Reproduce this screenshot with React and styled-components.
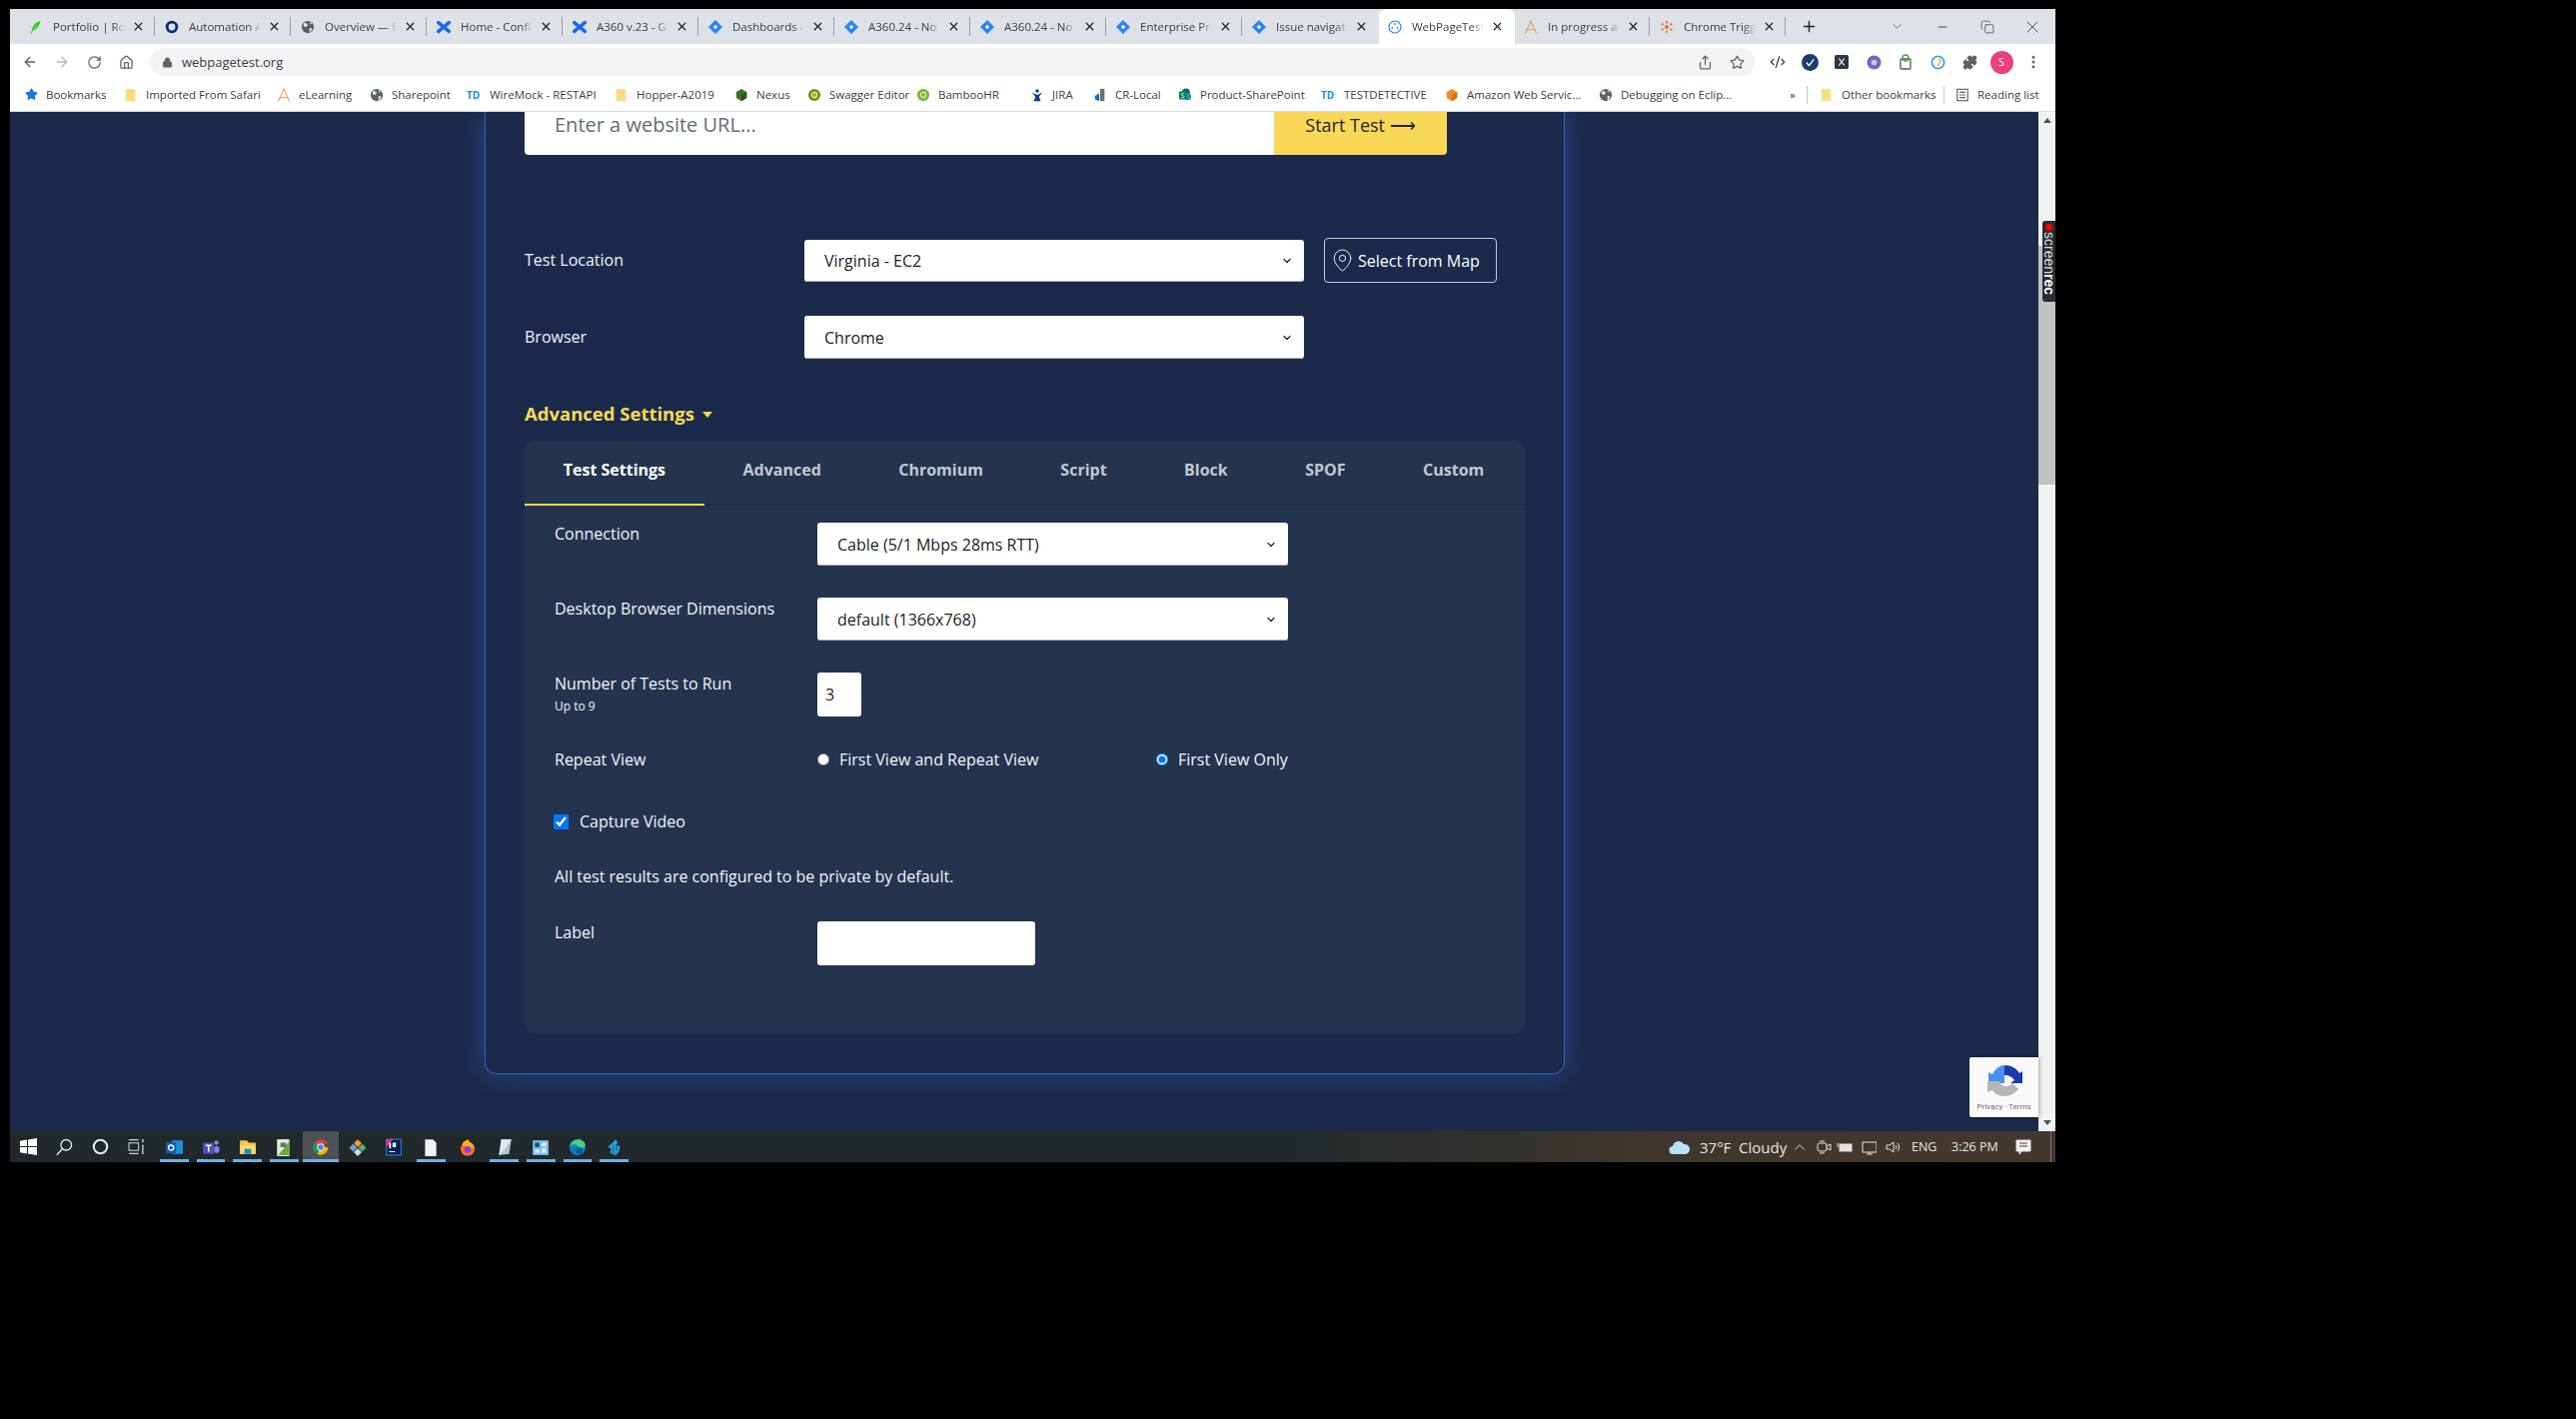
import React from "react";
import styled, { createGlobalStyle } from "styled-components";
import {
  ArrowLeft, ArrowRight, RotateCw, Home, Lock, Share, Star, Puzzle, MoreVertical,
  MapPin, Minus, Copy, X, Plus, ChevronDown, ChevronUp, Code2,
} from "lucide-react";

const GlobalStyle = createGlobalStyle`
  html, body { margin: 0; padding: 0; background: #000; }
  * { box-sizing: border-box; }
  body { font-family: "Open Sans", "Liberation Sans", sans-serif; }
`;

const Page = styled.div`
  min-height: 1420px;
  padding: 9px 0 0 10px;
  background: #000;
`;

const Screen = styled.div`
  width: 2047px;
  display: flex;
  flex-direction: column;
`;

/* browser chrome */
const TabStrip = styled.div`
  height: 35px;
  background: #dee1e6;
  display: flex;
  align-items: stretch;
  padding-left: 10px;
  color: #3c4043;
`;

const Tab = styled.div`
  width: 136px;
  display: flex;
  align-items: center;
  padding: 0 11px 0 9px;
  gap: 10px;
  position: relative;
  background: ${(p) => (p.$active ? "#fff" : "transparent")};
  border-radius: ${(p) => (p.$active ? "8px 8px 0 0" : "0")};
  &::after {
    content: "";
    position: absolute;
    right: 1px;
    top: 8px;
    bottom: 8px;
    width: 1px;
    background: ${(p) => (p.$noSep ? "transparent" : "#9aa0a6")};
  }
`;

const TabTitle = styled.span`
  flex: 1;
  min-width: 0;
  margin-right: -6px;
  font-size: 11.5px;
  white-space: nowrap;
  overflow: hidden;
  -webkit-mask-image: linear-gradient(90deg, #000 80%, transparent 96%);
  mask-image: linear-gradient(90deg, #000 80%, transparent 96%);
`;

const NewTab = styled.div`
  width: 44px;
  display: flex;
  align-items: center;
  justify-content: center;
  color: #202124;
`;

const WindowButtons = styled.div`
  margin-left: auto;
  padding-right: 1px;
  display: flex;
  align-items: center;
  color: #3c4043;
`;

const WindowButton = styled.div`
  width: 45px;
  display: flex;
  justify-content: center;
`;

const Toolbar = styled.div`
  height: 36px;
  background: #fff;
  display: flex;
  align-items: center;
  padding-left: 4px;
`;

const NavButton = styled.div`
  width: 32px;
  display: flex;
  justify-content: center;
  color: ${(p) => (p.$muted ? "#b4b7bb" : "#5f6368")};
`;

const UrlBar = styled.div`
  width: 1606px;
  height: 28px;
  margin-left: 8px;
  border-radius: 14px;
  background: #f1f3f4;
  display: flex;
  align-items: center;
  padding: 0 10px 0 12px;
  gap: 9px;
  font-size: 13px;
  color: #3c4043;
`;

const UrlActions = styled.div`
  margin-left: auto;
  display: flex;
  gap: 17px;
  color: #5f6368;
`;

const Extensions = styled.div`
  display: flex;
  align-items: center;
  margin-left: 7px;
`;

const Extension = styled.div`
  width: 32px;
  display: flex;
  justify-content: center;
  align-items: center;
  color: #3c4043;
`;

const Avatar = styled.div`
  width: 23px;
  height: 23px;
  border-radius: 50%;
  background: #ec407a;
  color: #fff;
  font-size: 10px;
  display: flex;
  align-items: center;
  justify-content: center;
`;

const BookmarkBar = styled.div`
  height: 32px;
  background: #fff;
  border-bottom: 1px solid #d9dbde;
  display: flex;
  align-items: center;
  padding: 0 0 2px 15px;
  font-size: 11.5px;
  color: #3c4043;
`;

const Bookmark = styled.div`
  width: ${(p) => p.$w}px;
  flex: none;
  display: flex;
  align-items: center;
  gap: 8px;
  white-space: nowrap;
`;

const BookmarkSep = styled.div`
  width: 1px;
  height: 18px;
  background: #c8cacd;
  margin-right: ${(p) => p.$after}px;
`;

/* page */
const Viewport = styled.div`
  height: 1020px;
  position: relative;
  overflow: hidden;
  display: flex;
  background: #1b2a4b;
`;

const Main = styled.div`
  flex: 1;
  padding-left: 475px;
`;

const Card = styled.div`
  width: 1081px;
  padding: 0 38px 40px 39px;
  background: #1b2a4b;
  border: 1px solid #2c62b4;
  border-top: none;
  border-radius: 0 0 12px 12px;
  box-shadow: 0 0 26px rgba(46, 104, 200, 0.5);
`;

const UrlRow = styled.div`
  width: 923px;
  height: 43px;
  display: flex;
  border-radius: 0 0 4px 4px;
  overflow: hidden;
`;

const UrlInput = styled.input`
  flex: 1;
  border: none;
  outline: none;
  padding: 0 30px 18px;
  font: 400 20px "Open Sans", sans-serif;
  background: #fff;
  &::placeholder { color: #666d76; opacity: 1; }
`;

const StartButton = styled.button`
  width: 173px;
  border: none;
  padding: 0 0 18px;
  background: #f9d857;
  color: #1e2433;
  font: 400 18px "Open Sans", sans-serif;
`;

const FieldRow = styled.div`
  display: flex;
  align-items: center;
  margin-top: ${(p) => p.$top}px;
`;

const FieldLabel = styled.label`
  width: 280px;
  margin-top: -2px;
  color: #f2f4f8;
  font-size: 16px;
`;

const SelectBox = styled.div`
  position: relative;
  width: ${(p) => p.$w}px;
  height: ${(p) => p.$h}px;
  svg {
    position: absolute;
    right: 11px;
    top: 50%;
    transform: translateY(-50%);
    color: #222;
    pointer-events: none;
  }
`;

const NativeSelect = styled.select`
  appearance: none;
  width: 100%;
  height: 100%;
  padding: 0 20px;
  background: #fff;
  border: none;
  border-radius: 3px;
  color: #222;
  font: 400 16px "Open Sans", sans-serif;
  box-shadow: inset 0 -1px 0 #a9afba;
`;

const MapButton = styled.button`
  width: 173px;
  height: 45px;
  margin-left: 20px;
  display: flex;
  align-items: center;
  gap: 3px;
  padding: 0 5px;
  background: transparent;
  border: 1px solid #c3c9d4;
  border-radius: 4px;
  color: #fff;
  font: 400 16px "Open Sans", sans-serif;
  white-space: nowrap;
`;

const AdvancedToggle = styled.div`
  margin-top: 43px;
  height: 24px;
  display: flex;
  align-items: center;
  gap: 8px;
  color: #f9d857;
  font-size: 18.5px;
  font-weight: 700;
  line-height: 24px;
`;

const Caret = styled.span`
  width: 0;
  height: 0;
  margin-top: 2px;
  border-left: 5px solid transparent;
  border-right: 5px solid transparent;
  border-top: 6px solid #f9d857;
`;

const TabPanel = styled.div`
  width: 1001px;
  margin-top: 15px;
  padding-bottom: 68px;
  background: #24344f;
  border-radius: 10px;
`;

const TabList = styled.div`
  height: 65px;
  display: flex;
  padding-right: 2px;
  border-bottom: 2px solid #1f2d49;
`;

const PanelTab = styled.div`
  flex: 1 1 auto;
  padding: 0 36px 6px;
  height: 65px;
  display: flex;
  align-items: center;
  justify-content: center;
  font-size: 16px;
  font-weight: 700;
  white-space: nowrap;
  color: ${(p) => (p.$active ? "#fff" : "#c2c7cf")};
  border-bottom: 2px solid ${(p) => (p.$active ? "#f9d857" : "transparent")};
`;

const PanelBody = styled.div`
  padding: 17px 30px 0;
  color: #f2f4f8;
  font-size: 16px;
  line-height: 24px;
`;

const SettingRow = styled.div`
  display: grid;
  grid-template-columns: 263px 1fr;
  align-items: start;
  margin-top: ${(p) => p.$top || 0}px;
`;

const SettingLabel = styled.label`
  margin-top: -1px;
`;

const SmallNote = styled.div`
  font-size: 12px;
  line-height: 22px;
`;

const BoxInput = styled.input`
  width: ${(p) => p.$w}px;
  height: 44px;
  padding: 0 8px;
  border: none;
  border-radius: 3px;
  background: #fff;
  color: #222;
  font: 400 16px "Open Sans", sans-serif;
`;

const RadioGroup = styled.div`
  display: grid;
  grid-template-columns: 339px auto;
  margin-top: -1px;
`;

const RadioLabel = styled.label`
  display: flex;
  align-items: center;
  gap: 10px;
  white-space: nowrap;
`;

const Radio = styled.input`
  width: 12px;
  height: 12px;
  margin: 0;
  accent-color: #0075ff;
`;

const CheckRow = styled.label`
  display: flex;
  align-items: center;
  gap: 11px;
  margin: 38px 0 0 -1px;
`;

const CheckBox = styled.input`
  width: 15px;
  height: 15px;
  margin: 0;
  accent-color: #0075ff;
`;

const Plain = styled.p`
  margin: 31px 0 0;
`;

/* scrollbar + overlays */
const ScrollBar = styled.div`
  width: 17px;
  flex: none;
  background: #f1f1f1;
  display: flex;
  flex-direction: column;
  justify-content: space-between;
  align-items: center;
  padding: 6px 0;
  position: relative;
`;

const ScrollThumb = styled.div`
  position: absolute;
  top: 134px;
  left: 0;
  right: 0;
  height: 239px;
  background: #c1c1c1;
`;

const ScrollArrow = styled.span`
  width: 0;
  height: 0;
  border-left: 4px solid transparent;
  border-right: 4px solid transparent;
  border-bottom: ${(p) => (p.$down ? "0" : "5px solid #505050")};
  border-top: ${(p) => (p.$down ? "5px solid #505050" : "0")};
`;

const RecBadge = styled.div`
  position: absolute;
  top: 109px;
  right: 0;
  width: 13px;
  height: 81px;
  background: #2a2c33;
  border-radius: 3px 0 0 3px;
  color: #dcdcdc;
  font: 400 14px "Liberation Sans", sans-serif;
  display: flex;
  flex-direction: column;
  align-items: center;
  padding-top: 3px;
  b { font-weight: 700; color: #fff; }
`;

const RecDot = styled.span`
  width: 7px;
  height: 7px;
  border-radius: 50%;
  background: #f00;
  flex: none;
  margin-bottom: 1px;
`;

const RecText = styled.span`
  writing-mode: vertical-rl;
  line-height: 13px;
`;

const Recaptcha = styled.div`
  position: absolute;
  right: 17px;
  bottom: 14px;
  width: 69px;
  height: 60px;
  background: #f9f9f9;
  border-radius: 2px 0 0 2px;
  box-shadow: 0 0 5px rgba(0, 0, 0, 0.45);
  display: flex;
  flex-direction: column;
  align-items: center;
  padding-top: 5px;
  color: #6f6f6f;
  font: 400 8px Roboto, sans-serif;
  gap: 2px;
  white-space: nowrap;
`;

/* taskbar */
const Taskbar = styled.div`
  height: 31px;
  display: flex;
  align-items: stretch;
  background: linear-gradient(90deg, #21292d 0%, #21292c 62%, #3f372f 80%, #43382f 100%);
  color: #e4e4e4;
`;

const TaskCell = styled.div`
  width: ${(p) => p.$w || 36.7}px;
  flex: none;
  display: flex;
  align-items: center;
  justify-content: center;
  position: relative;
  background: ${(p) => (p.$active ? "#4d5155" : "transparent")};
  &::after {
    content: "";
    display: ${(p) => (p.$open ? "block" : "none")};
    position: absolute;
    bottom: 0;
    left: ${(p) => (p.$active ? 0 : 4)}px;
    right: ${(p) => (p.$active ? 0 : 4)}px;
    height: 3px;
    background: #6fb0e6;
  }
`;

const TaskGap = styled.div`
  width: 2px;
  flex: none;
`;

const Tray = styled.div`
  margin-left: auto;
  display: flex;
  align-items: center;
  font-size: 12px;
`;

const TrayItem = styled.div`
  width: ${(p) => p.$w}px;
  flex: none;
  display: flex;
  align-items: center;
  white-space: nowrap;
  font-size: ${(p) => p.$size || 12}px;
`;

const ShowDesktop = styled.div`
  width: 5px;
  align-self: stretch;
  border-left: 1px solid #77736d;
`;

/* favicon drawings */
const Svg = ({ s = 14, children, vb = "0 0 16 16" }) => (
  <svg width={s} height={s} viewBox={vb} style={{ flex: "none", display: "block" }}>{children}</svg>
);

const Feather = () => <Svg><path d="M13 1C8 2 4 6 3 13l-1 2 1 .3C4 12 7 8 10 5 7.8 8 6 11 5 12c4-1 7-6 8-11z" fill="#35c52a" /></Svg>;
const Ring = () => <Svg><circle cx="8" cy="8" r="5.5" fill="none" stroke="#0b2a7e" strokeWidth="3.2" /></Svg>;
const Globe = () => (
  <Svg>
    <circle cx="8" cy="8" r="7" fill="#5c6166" />
    <path d="M4 3l3 1 1 2-2 2-3-1zM10 9l3 .5-1 3.5-2 1zM10 2l3 2-2 1z" fill="#e6e6e6" />
  </Svg>
);
const Confluence = () => (
  <Svg><path d="M2 3l12 10M14 3L2 13" stroke="#1668f0" strokeWidth="4" strokeLinecap="round" fill="none" /></Svg>
);
const Jira = () => (
  <Svg>
    <path d="M8 0l8 8-8 8-8-8z" fill="#2684ff" />
    <path d="M8 5.5L10.5 8 8 10.5 5.5 8z" fill="#fff" />
  </Svg>
);
const Wpt = () => (
  <Svg>
    <circle cx="8" cy="8" r="6.8" fill="none" stroke="#2f80ed" strokeWidth="1.3" />
    <circle cx="8" cy="4.5" r="1" fill="#2f80ed" />
    <circle cx="5" cy="9" r="1" fill="#2f80ed" />
    <circle cx="11" cy="9" r="1" fill="#2f80ed" />
  </Svg>
);
const LogoA = () => (
  <Svg><path d="M1.5 15.5L8 1l6.5 14.5M4 12c3-2 6-1.5 8.5-.5" fill="none" stroke="#ee8a4f" strokeWidth="1.1" /></Svg>
);
const Dots = () => (
  <Svg>
    {[[8, 2.5], [8, 13.5], [3, 5], [13, 5], [3, 11], [13, 11]].map(([x, y]) => (
      <circle key={`${x}-${y}`} cx={x} cy={y} r="1.3" fill="#f2692a" />
    ))}
    <circle cx="8" cy="8" r="2.2" fill="#f2692a" />
  </Svg>
);
const Folder = () => (
  <Svg><path d="M3 1h6l4 1v12a1 1 0 0 1-1 1H3a1 1 0 0 1-1-1V2a1 1 0 0 1 1-1z" fill="#fbdc82" /></Svg>
);
const TdMark = styled.span`
  color: #1a8cd8;
  font: 700 10px "Open Sans", sans-serif;
  width: 15px;
  flex: none;
`;
const Hex = ({ c, c2 }) => (
  <Svg>
    <path d="M8 1l6 3.5v7L8 15l-6-3.5v-7z" fill={c} />
    {c2 && <path d="M8 8l6-3.5v7L8 15z" fill={c2} />}
  </Svg>
);
const Badge = ({ c, t }) => (
  <Svg>
    <circle cx="8" cy="8" r="7" fill={c} />
    <circle cx="8" cy="8" r="3" fill="none" stroke="#e8f0c8" strokeWidth="1.2" />
    {t && <path d="M8 5v6" stroke="#e8f0c8" />}
  </Svg>
);
const JiraFig = () => (
  <Svg><path d="M8 1.5a2 2 0 1 1 0 4 2 2 0 1 1 0-4zM2 5l6 3 6-3-4 5 2 5H4l2-5z" fill="#143a8a" /></Svg>
);
const Database = () => (
  <Svg><path d="M2 9l5-3v9l-5-2z" fill="#1a6fb0" /><path d="M8 1h5v14H8z" fill="#6a6f75" /></Svg>
);
const SharePoint = () => (
  <Svg>
    <circle cx="9" cy="5" r="4.5" fill="#0b6a6f" />
    <circle cx="11" cy="10" r="4" fill="#1a9ba1" />
    <rect x="1" y="4" width="9" height="9" rx="1" fill="#0a7c70" />
    <path d="M3.5 11c2 .8 3.5 0 3.2-1.3C6.4 8.5 4 8.8 4 7.5 4 6.5 5.5 6 6.7 6.7" fill="none" stroke="#fff" />
  </Svg>
);
const ReadingList = () => (
  <Svg>
    <rect x="2" y="1.5" width="12" height="13" fill="none" stroke="#5f6368" strokeWidth="1.3" />
    <path d="M4.5 5h7M4.5 8h7M4.5 11h7" stroke="#5f6368" strokeWidth="1.2" />
  </Svg>
);

const tabs = [
  { icon: <Feather />, title: "Portfolio | Rob" },
  { icon: <Ring />, title: "Automation A" },
  { icon: <Globe />, title: "Overview — E" },
  { icon: <Confluence />, title: "Home - Confl" },
  { icon: <Confluence />, title: "A360 v.23 - G" },
  { icon: <Jira />, title: "Dashboards -" },
  { icon: <Jira />, title: "A360.24 - No" },
  { icon: <Jira />, title: "A360.24 - No" },
  { icon: <Jira />, title: "Enterprise Pro" },
  { icon: <Jira />, title: "Issue navigato", noSep: true },
  { icon: <Wpt />, title: "WebPageTest", active: true, noSep: true },
  { icon: <LogoA />, title: "In progress ac" },
  { icon: <Dots />, title: "Chrome Trigg" },
];

const bookmarks = [
  { w: 99, icon: <Star size={13} fill="#1a73e8" color="#1a73e8" />, label: "Bookmarks" },
  { w: 153, icon: <Folder />, label: "Imported From Safari" },
  { w: 93, icon: <LogoA />, label: "eLearning" },
  { w: 97, icon: <Globe />, label: "Sharepoint" },
  { w: 148, icon: <TdMark>TD</TdMark>, label: "WireMock - RESTAPI" },
  { w: 120, icon: <Folder />, label: "Hopper-A2019" },
  { w: 73, icon: <Hex c="#3f6e2e" c2="#2c5220" />, label: "Nexus" },
  { w: 109, icon: <Badge c="#6c9a14" t />, label: "Swagger Editor" },
  { w: 114, icon: <Badge c="#7ab834" />, label: "BambooHR" },
  { w: 63, icon: <JiraFig />, label: "JIRA" },
  { w: 85, icon: <Database />, label: "CR-Local" },
  { w: 143, icon: <SharePoint />, label: "Product-SharePoint" },
  { w: 124, icon: <TdMark>TD</TdMark>, label: "TESTDETECTIVE" },
  { w: 154, icon: <Hex c="#f58a1f" c2="#d96b10" />, label: "Amazon Web Servic..." },
  { w: 191, icon: <Globe />, label: "Debugging on Eclip..." },
];

const panelTabs = ["Test Settings", "Advanced", "Chromium", "Script", "Block", "SPOF", "Custom"];

const Win = () => (
  <Svg s={17}><path d="M0 2.5l6.5-1v6H0zM7.5 1.3L16 0v7.5H7.5zM0 8.5h6.5v6l-6.5-1zM7.5 8.5H16V16l-8.5-1.3z" fill="#fff" /></Svg>
);
const SearchGlass = () => (
  <Svg s={18}><circle cx="10" cy="6" r="4.7" fill="none" stroke="#e8e8e8" strokeWidth="1.2" /><path d="M6.5 9.5L1.5 15" stroke="#e8e8e8" strokeWidth="1.3" /></Svg>
);
const Cortana = () => (
  <Svg s={17}><circle cx="8" cy="8" r="6.3" fill="none" stroke="#e8e8e8" strokeWidth="2" /></Svg>
);
const TaskView = () => (
  <Svg s={17}>
    <rect x="1" y="4.5" width="9" height="7" fill="none" stroke="#d0d0d0" />
    <path d="M1 1.5h9M1 14.5h9" stroke="#d0d0d0" strokeWidth="1.3" />
    <path d="M14 1v3M14 6v9" stroke="#d0d0d0" strokeWidth="1.3" />
  </Svg>
);
const Outlook = () => (
  <Svg s={18}><rect x="6" y="2" width="10" height="12" fill="#1c8ddb" /><rect x="1" y="3.5" width="9" height="10" rx="1" fill="#0f5fb0" /><circle cx="5.5" cy="8.5" r="2.3" fill="none" stroke="#fff" strokeWidth="1.2" /></Svg>
);
const Teams = () => (
  <Svg s={18}><rect x="1" y="4" width="10" height="10" rx="1" fill="#4f52b2" /><path d="M3.5 6.5h5M6 6.5V12" stroke="#fff" strokeWidth="1.3" /><circle cx="13" cy="4" r="2" fill="#7b83eb" /><rect x="11" y="7" width="4.5" height="6" rx="1.5" fill="#7b83eb" /></Svg>
);
const Explorer = () => (
  <Svg s={18}><path d="M1 2h6l2 2h6v10H1z" fill="#f5c242" /><path d="M1 6h14v8H1z" fill="#ffd96a" /><rect x="5" y="9.5" width="6" height="4.5" fill="#1d87d8" /></Svg>
);
const Notebook = () => (
  <Svg s={18}><rect x="2" y="1" width="11" height="15" fill="#e6eadf" /><path d="M3 15l5-6 5-7v13z" fill="#6cab3c" /><path d="M5 4h5v4H5z" fill="#6d6d6d" /></Svg>
);
const Chrome = () => (
  <Svg s={18}>
    <path d="M8 8L2 5.5A7 7 0 0 1 14.5 5H8z" fill="#db4437" />
    <path d="M8 8L4.5 14A7 7 0 0 1 2 4.5z" fill="#0f9d58" />
    <path d="M8 8h6.6A7 7 0 0 1 4.8 14.3z" fill="#f4b400" />
    <circle cx="8" cy="8" r="3.3" fill="#fff" />
    <circle cx="8" cy="8" r="2.5" fill="#4285f4" />
  </Svg>
);
const Git = () => (
  <Svg s={18}>
    <path d="M8 1l3.5 3.5L8 8 4.5 4.5z" fill="#f0a030" />
    <path d="M4 5l3.5 3.5L4 12 .5 8.5z" fill="#6aa6f0" />
    <path d="M12 5l3.5 3.5L12 12 8.5 8.5z" fill="#58b368" />
    <path d="M8 9l3.5 3.5L8 16l-3.5-3.5z" fill="#d9d9d9" />
  </Svg>
);
const Idea = () => (
  <Svg s={18}>
    <rect x="1.5" y="1" width="13" height="14" fill="#0d1a50" stroke="#2b7fe0" />
    <path d="M1.5 1h6L1.5 8z" fill="#e8308a" />
    <path d="M4 4h1.5v5H4zM7 4h3v4H7zM4 11.5h5v1H4z" fill="#fff" />
  </Svg>
);
const Blank = () => <Svg s={18}><path d="M3 1h7l3 3v12H3z" fill="#f2f2f2" /></Svg>;
const Firefox = () => (
  <Svg s={18}>
    <circle cx="8" cy="9.5" r="6.3" fill="#ff6a2a" />
    <path d="M3 6c1-3 4-5 6-5-1 2 2 2 4 5 1 2 .5 3 .5 3L8 8z" fill="#ffb020" />
    <circle cx="8" cy="10" r="3" fill="#8f3bd6" />
  </Svg>
);
const Glass = () => (
  <Svg s={18}><path d="M5 1h9l-2 13-9 1z" fill="#a9c6cf" /><path d="M5 1h9L8 10 3 15z" fill="#dfe9ec" /></Svg>
);
const Board = () => (
  <Svg s={18}><rect x="1" y="2" width="14" height="13" fill="#7cc1ec" /><rect x="3" y="4" width="4" height="4" fill="#16527e" /><path d="M9 4h4v3H9zM9 9h4v4H9zM3 10h4v3H3z" fill="#dff1fb" /></Svg>
);
const Edge = () => (
  <Svg s={18}>
    <circle cx="8" cy="8" r="7.3" fill="#0f7fb8" />
    <path d="M1 8C2 2 9-1 13.5 3 16 5.5 15 9 11 9 8 9 9 6 6 5.5 3.5 5.5 1.5 6.5 1 8z" fill="#45d17c" />
    <circle cx="9.5" cy="11" r="3" fill="#0a5b95" />
  </Svg>
);
const Azure = () => (
  <Svg s={18}><path d="M9 1l2 3-2 2 4 1-1 5-3 3-5-2 1-4-3-1 3-3z" fill="#1fa3dd" /><path d="M7 6v7M10 5v6" stroke="#0c5e8c" /></Svg>
);

const taskApps = [
  { el: <Outlook />, open: true }, { el: <Teams />, open: true }, { el: <Explorer />, open: true },
  { el: <Notebook />, open: true }, { el: <Chrome />, open: true, active: true }, { el: <Git /> },
  { el: <Idea /> }, { el: <Blank />, open: true }, { el: <Firefox /> }, { el: <Glass />, open: true },
  { el: <Board />, open: true }, { el: <Edge />, open: true }, { el: <Azure />, open: true },
];

const Cloud = () => (
  <Svg s={22} vb="0 0 22 16">
    <path d="M5 15a4 4 0 0 1-1-8 6 6 0 0 1 11-2 5 5 0 0 1 2 10z" fill="#b9e0f7" />
  </Svg>
);
const TrayIcon = ({ children, w = 16 }) => (
  <svg width={w} height="16" viewBox={`0 0 ${w} 16`} fill="none" stroke="#e4e4e4" strokeWidth="1">{children}</svg>
);

const RecaptchaLogo = () => (
  <Svg s={38} vb="0 0 38 38">
    <path d="M3 21V10l4 2c3-6 8-9 12-9v18z" fill="#4a90f4" />
    <path d="M19 3c7 0 12 3 15 8l3-2v12H25l4-3c-2-3-5-5-10-5z" fill="#1c3aa9" />
    <path d="M2 19h12c1 5 9 7 13 2l6 6c-7 9-21 9-26 1l-5 2z" fill="#b5b5b5" />
  </Svg>
);

const Select = ({ w, h, children }) => (
  <SelectBox $w={w} $h={h}>
    <NativeSelect>{children}</NativeSelect>
    <ChevronDown size={12} strokeWidth={2.4} />
  </SelectBox>
);

function BrowserChrome() {
  return (
    <>
      <TabStrip>
        {tabs.map((t, i) => (
          <Tab key={i} $active={t.active} $noSep={t.noSep}>
            {t.icon}
            <TabTitle>{t.title}</TabTitle>
            <X size={13} strokeWidth={2.2} color="#202124" style={{ flex: "none" }} />
          </Tab>
        ))}
        <NewTab><Plus size={17} strokeWidth={2} /></NewTab>
        <WindowButtons>
          <WindowButton><ChevronDown size={15} strokeWidth={1} /></WindowButton>
          <WindowButton><Minus size={14} strokeWidth={1.5} /></WindowButton>
          <WindowButton><Copy size={14} strokeWidth={1.2} /></WindowButton>
          <WindowButton><X size={20} strokeWidth={1} /></WindowButton>
        </WindowButtons>
      </TabStrip>
      <Toolbar>
        <NavButton><ArrowLeft size={16} /></NavButton>
        <NavButton $muted><ArrowRight size={16} /></NavButton>
        <NavButton><RotateCw size={15} /></NavButton>
        <NavButton><Home size={15} /></NavButton>
        <UrlBar>
          <Lock size={11} fill="#5f6368" color="#5f6368" />
          webpagetest.org
          <UrlActions>
            <Share size={15} />
            <Star size={15} />
          </UrlActions>
        </UrlBar>
        <Extensions>
          <Extension><Code2 size={16} /></Extension>
          <Extension>
            <Svg s={17}><circle cx="8" cy="8" r="8" fill="#1c3d6e" /><path d="M4.5 8l2.5 3 4.5-6" stroke="#fff" strokeWidth="1.3" fill="none" /></Svg>
          </Extension>
          <Extension>
            <Svg s={14}><rect width="16" height="16" rx="2" fill="#2b3a42" /><path d="M5 4l6 8M11 4l-6 8" stroke="#fff" strokeWidth="1.4" /></Svg>
          </Extension>
          <Extension>
            <Svg s={15}><circle cx="8" cy="8" r="7.5" fill="#6a6bc4" /><circle cx="8" cy="8" r="3" fill="#c9c9f0" /></Svg>
          </Extension>
          <Extension>
            <Svg s={16}><rect x="3" y="5" width="10" height="10" rx="1" fill="none" stroke="#555" strokeWidth="1.3" /><circle cx="8" cy="4" r="3" fill="none" stroke="#48a548" strokeWidth="1.5" /></Svg>
          </Extension>
          <Extension>
            <Svg s={15}><circle cx="8" cy="8" r="6.5" fill="none" stroke="#46a3e0" strokeWidth="2" /><path d="M8 4l3 2-3 6" stroke="#f3b21a" strokeWidth="1.5" fill="none" /></Svg>
          </Extension>
          <Extension><Puzzle size={15} fill="#5f6368" color="#5f6368" /></Extension>
          <Extension><Avatar>S</Avatar></Extension>
          <Extension><MoreVertical size={16} strokeWidth={2.5} color="#5f6368" /></Extension>
        </Extensions>
      </Toolbar>
      <BookmarkBar>
        {bookmarks.map((b) => (
          <Bookmark key={b.label} $w={b.w}>{b.icon}{b.label}</Bookmark>
        ))}
        <Bookmark $w={17}>»</Bookmark>
        <BookmarkSep $after={12} />
        <Bookmark $w={124}><Folder />Other bookmarks</Bookmark>
        <BookmarkSep $after={11} />
        <Bookmark $w={90}><ReadingList />Reading list</Bookmark>
      </BookmarkBar>
    </>
  );
}

function TestForm() {
  return (
    <Card>
      <UrlRow>
        <UrlInput placeholder="Enter a website URL..." />
        <StartButton>Start Test ⟶</StartButton>
      </UrlRow>
      <FieldRow $top={83}>
        <FieldLabel>Test Location</FieldLabel>
        <Select w={500} h={42}><option>Virginia - EC2</option></Select>
        <MapButton><MapPin size={25} strokeWidth={0.9} />Select from Map</MapButton>
      </FieldRow>
      <FieldRow $top={33}>
        <FieldLabel>Browser</FieldLabel>
        <Select w={500} h={43}><option>Chrome</option></Select>
      </FieldRow>
      <AdvancedToggle>Advanced Settings <Caret /></AdvancedToggle>
      <TabPanel>
        <TabList>
          {panelTabs.map((t, i) => (
            <PanelTab key={t} $active={i === 0}>{t}</PanelTab>
          ))}
        </TabList>
        <PanelBody>
          <SettingRow>
            <SettingLabel>Connection</SettingLabel>
            <Select w={471} h={43}><option>Cable (5/1 Mbps 28ms RTT)</option></Select>
          </SettingRow>
          <SettingRow $top={32}>
            <SettingLabel>Desktop Browser Dimensions</SettingLabel>
            <Select w={471} h={43}><option>default (1366x768)</option></Select>
          </SettingRow>
          <SettingRow $top={32}>
            <SettingLabel>
              Number of Tests to Run
              <SmallNote>Up to 9</SmallNote>
            </SettingLabel>
            <BoxInput $w={44} defaultValue="3" />
          </SettingRow>
          <SettingRow $top={31}>
            <SettingLabel>Repeat View</SettingLabel>
            <RadioGroup>
              <RadioLabel><Radio type="radio" name="repeat" />First View and Repeat View</RadioLabel>
              <RadioLabel><Radio type="radio" name="repeat" defaultChecked />First View Only</RadioLabel>
            </RadioGroup>
          </SettingRow>
          <CheckRow><CheckBox type="checkbox" defaultChecked />Capture Video</CheckRow>
          <Plain>All test results are configured to be private by default.</Plain>
          <SettingRow $top={33}>
            <SettingLabel>Label</SettingLabel>
            <BoxInput $w={218} />
          </SettingRow>
        </PanelBody>
      </TabPanel>
    </Card>
  );
}

function WindowsTaskbar() {
  return (
    <Taskbar>
      <TaskCell $w={36}><Win /></TaskCell>
      <TaskCell $w={36}><SearchGlass /></TaskCell>
      <TaskCell $w={36}><Cortana /></TaskCell>
      <TaskCell $w={36}><TaskView /></TaskCell>
      <TaskGap />
      {taskApps.map((a, i) => (
        <TaskCell key={i} $open={a.open} $active={a.active}>{a.el}</TaskCell>
      ))}
      <Tray>
        <TrayItem $w={31}><Cloud /></TrayItem>
        <TrayItem $w={91} $size={15}>37°F&nbsp;&nbsp;Cloudy</TrayItem>
        <TrayItem $w={25}><ChevronUp size={18} strokeWidth={1.2} /></TrayItem>
        <TrayItem $w={21}>
          <TrayIcon><rect x="2" y="4" width="9" height="8" rx="2" /><path d="M11 7l4-2v6l-4-2M4 2h5M4 14h5" /></TrayIcon>
        </TrayItem>
        <TrayItem $w={24}>
          <TrayIcon><rect x="3" y="5" width="12" height="7" fill="#e4e4e4" /><path d="M1 4v4" /></TrayIcon>
        </TrayItem>
        <TrayItem $w={24}>
          <TrayIcon><path d="M2 3h14v10H2zM6 15h6M9 13v2" /></TrayIcon>
        </TrayItem>
        <TrayItem $w={27}>
          <TrayIcon><path d="M2 6h3l4-3v10l-4-3H2zM11 6c1 1 1 3 0 4M13 4c2 2 2 6 0 8" /></TrayIcon>
        </TrayItem>
        <TrayItem $w={40} $size={12.5}>ENG</TrayItem>
        <TrayItem $w={64} $size={12.5}>3:26 PM</TrayItem>
        <TrayItem $w={35}>
          <TrayIcon><path d="M1 1h14v11H6l-2 3v-3H1z" fill="#f2f2f2" /><path d="M4 4h8M4 7h8" stroke="#444" /></TrayIcon>
        </TrayItem>
        <ShowDesktop />
      </Tray>
    </Taskbar>
  );
}

export default function App() {
  return (
    <Page>
      <GlobalStyle />
      <Screen>
        <BrowserChrome />
        <Viewport>
          <Main><TestForm /></Main>
          <ScrollBar>
            <ScrollArrow />
            <ScrollThumb />
            <ScrollArrow $down />
            <RecBadge>
              <RecDot />
              <RecText>screen<b>rec</b></RecText>
            </RecBadge>
          </ScrollBar>
          <Recaptcha>
            <RecaptchaLogo />
            <span>Privacy · Terms</span>
          </Recaptcha>
        </Viewport>
        <WindowsTaskbar />
      </Screen>
    </Page>
  );
}
